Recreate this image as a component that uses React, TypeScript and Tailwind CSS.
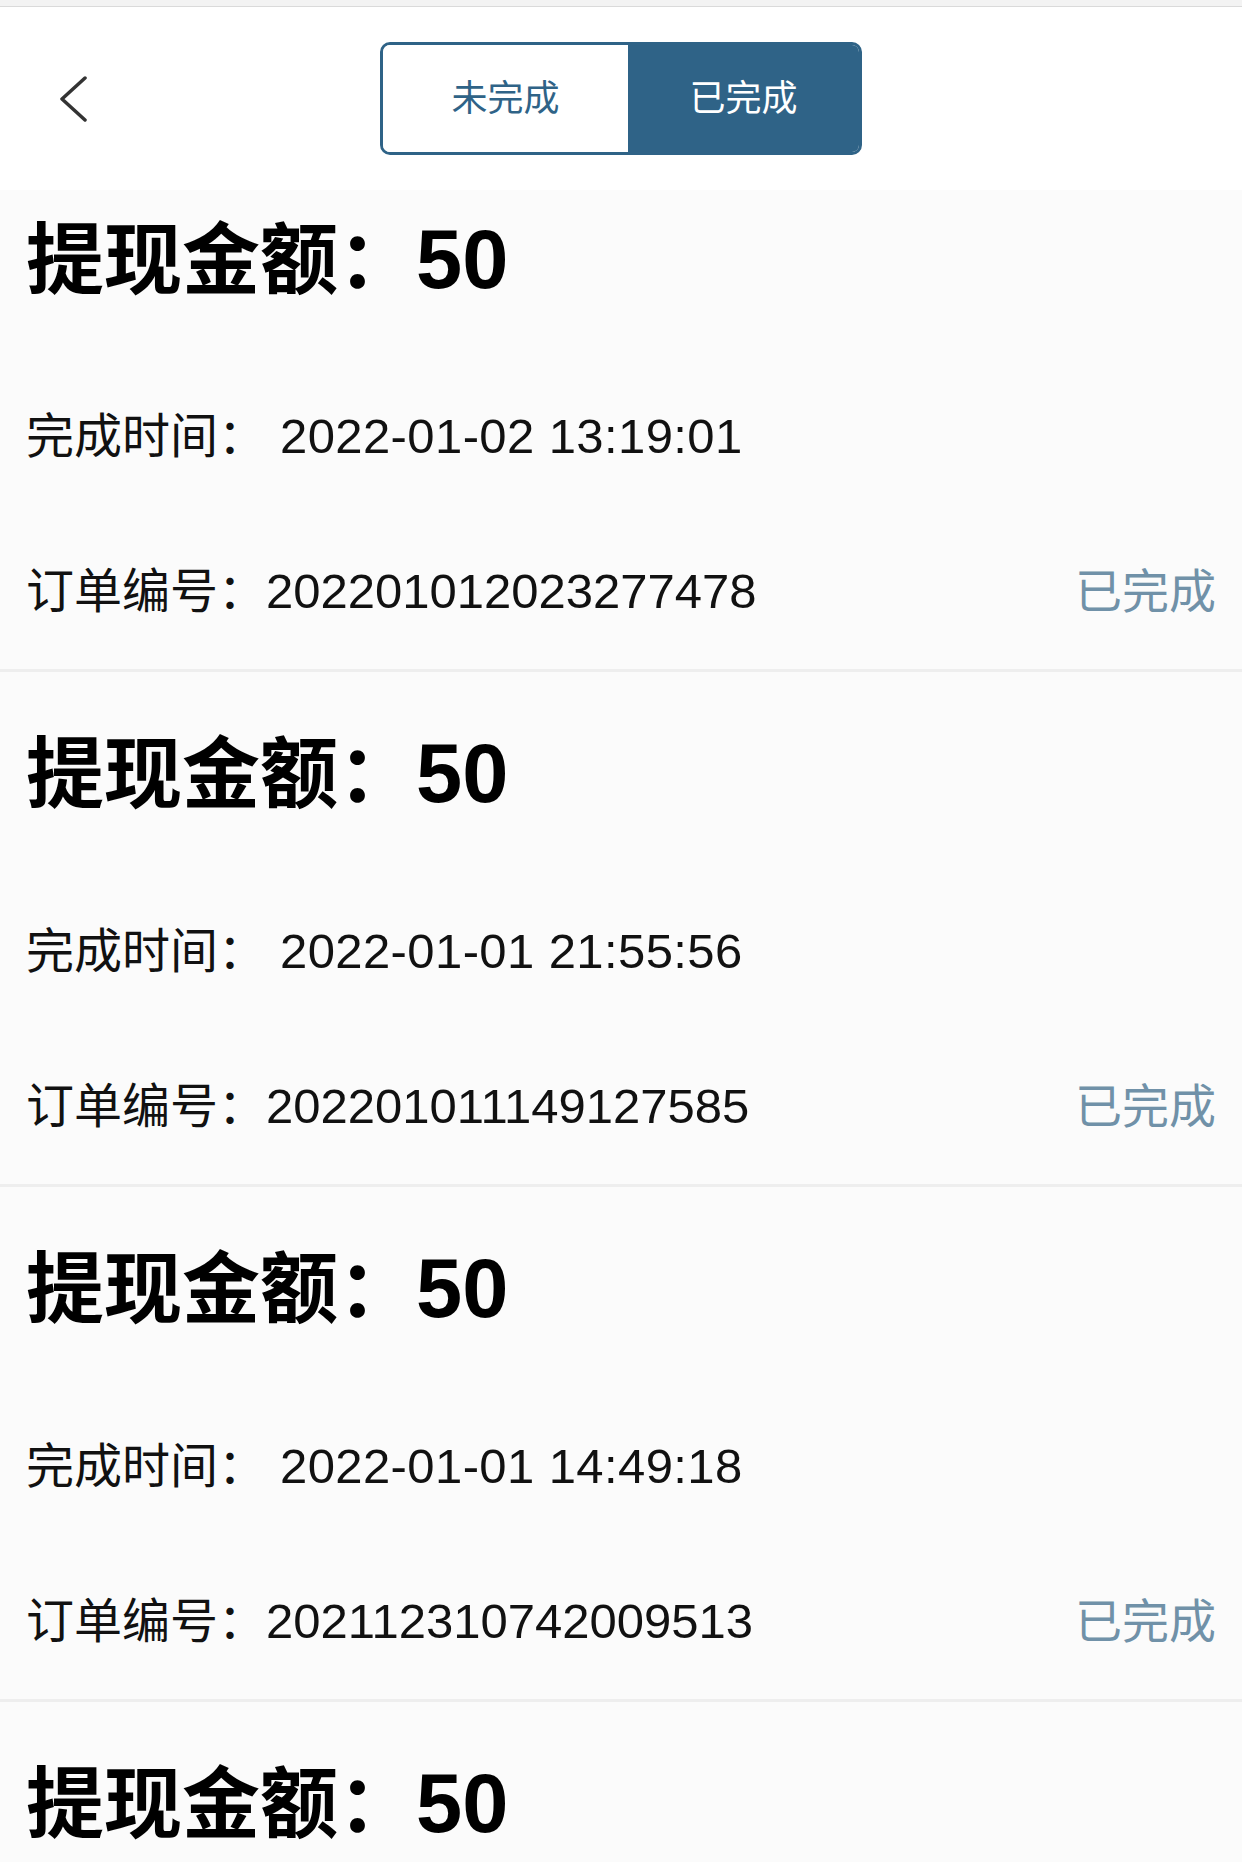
import React from "react";

const items = [
  { time: "2022-01-02 13:19:01", order: "202201012023277478" },
  { time: "2022-01-01 21:55:56", order: "202201011149127585" },
  { time: "2022-01-01 14:49:18", order: "202112310742009513" },
  { time: "2022-01-01 10:12:33", order: "202112310511108246" },
];

export default function App() {
  return (
    <div
      className="w-[1242px] h-[1862px] overflow-hidden bg-[#fbfbfb] text-black"
      style={{ fontFamily: '"Liberation Sans", "Noto Sans CJK SC", sans-serif' }}
    >
      <div className="h-[7px] bg-[#f3f3f3] border-b border-[#dadada]" />
      <div className="h-[183px] bg-white grid grid-cols-[1fr_auto_1fr] items-center">
        <div className="pl-[60px] flex items-center">
          <svg width="28" height="46" viewBox="0 0 28 46" fill="none">
            <polyline
              points="25,2 2,23 25,44"
              stroke="#333333"
              strokeWidth="3.5"
              strokeLinecap="round"
              strokeLinejoin="round"
            />
          </svg>
        </div>
        <div className="flex h-[113px] border-[3px] border-[#2f6387] rounded-[10px] overflow-hidden">
          <div className="w-[245px] flex items-center justify-center bg-white text-[#2f6387] text-[36px] leading-none">
            未完成
          </div>
          <div className="w-[231px] flex items-center justify-center bg-[#2f6387] text-white text-[36px] leading-none">
            已完成
          </div>
        </div>
        <div />
      </div>
      <div className="flex flex-col">
        {items.map((it, i) => (
          <div key={i} className={i > 0 ? "border-t-[3px] border-[#eeeeee]" : ""}>
            <div
              className={
                i === 0
                  ? "h-[170px] pb-[32px] px-[26px] flex items-center"
                  : "h-[203px] px-[26px] flex items-center"
              }
            >
              <span className="text-[78px] font-bold leading-none">
                提现金额：<span className="text-[83px]">50</span>
              </span>
            </div>
            <div className="h-[153px] px-[26px] flex items-center">
              <span className="text-[48px] leading-none text-[#111]">
                完成时间：<span className="ml-[14px] text-[49px] tracking-[0.4px]">{it.time}</span>
              </span>
            </div>
            <div className="h-[156px] px-[26px] flex items-center justify-between">
              <span className="text-[48px] leading-none text-[#111]">
                订单编号：<span className="text-[49px]">{it.order}</span>
              </span>
              <span className="text-[47px] leading-none text-[#7091a8]">已完成</span>
            </div>
          </div>
        ))}
      </div>
    </div>
  );
}
